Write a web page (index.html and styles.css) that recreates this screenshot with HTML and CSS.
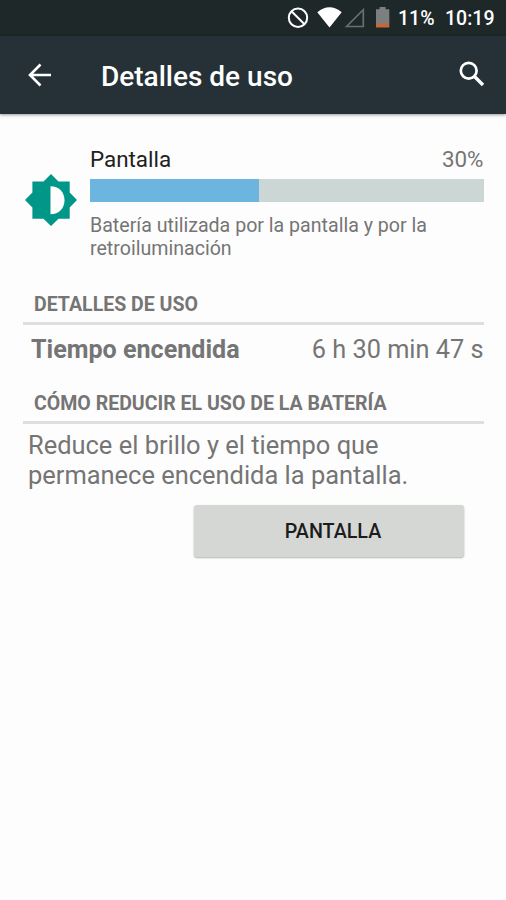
FILE: index.html
```html
<!DOCTYPE html>
<html lang="es">
<head>
<meta charset="utf-8">
<title>Detalles de uso</title>
<link rel="stylesheet" href="styles.css">
</head>
<body>
<div class="status">
  <svg class="status-icons" width="116" height="36" viewBox="0 0 116 36">
    <g fill="none" stroke="#fff" stroke-width="2"><circle cx="12" cy="17.700" r="9.200"/><path d="M5.500 11.200l13 13"/></g>
    <path fill="#fff" d="M31.300 12.200Q43.500 2.500 55.700 12.200L43.500 27.400z"/>
    <path fill="none" stroke="#667071" stroke-width="1.700" d="M60.500 26.500L77.300 9.700V26.500z"/>
    <path fill="#7c7f7f" d="M90 9.200h3.600V7h6v2.200h3.700V24H90z"/>
    <path fill="#c4683c" d="M90 23.500h13.300v4H90z"/>
  </svg>
  <span class="battery">11%</span>
  <span class="clock">10:19</span>
</div>
<header class="toolbar">
  <svg class="back" width="24" height="24" viewBox="0 0 24 24" fill="none" stroke="#fff" stroke-width="2.600"><path d="M23 12H2.500M12.500 1.500L2 12l10.500 10.500"/></svg>
  <h1>Detalles de uso</h1>
  <svg class="search" width="26" height="26" viewBox="0 0 26 26" fill="none" stroke="#fff"><circle cx="9.700" cy="9.700" r="7.900" stroke-width="2.700"/><path d="M15.500 15.500l8.500 8.500" stroke-width="3.300"/></svg>
</header>
<main>
  <section class="usage">
    <svg class="bright" width="52" height="52" viewBox="0 0 52 52"><path fill="#009688" d="M26 0l7.500 7.400H44.700V18.500L52 26l-7.300 7.500V44.700H33.500L26 52l-7.500-7.300H7.400V33.500L0 26l7.400-7.500V7.400H18.500z"/><path fill="#fff" d="M25.500 12.200c8.500 0 14 6 14 14s-5.500 14-14 14z"/></svg>
    <div class="info">
      <div class="row name"><span>Pantalla</span><span class="percent">30%</span></div>
      <div class="track"><div class="fill"></div></div>
      <p class="summary">Batería utilizada por la pantalla y por la retroiluminación</p>
    </div>
  </section>
  <h2>DETALLES DE USO</h2>
  <div class="row time"><b>Tiempo encendida</b><span class="duration">6 h 30 min 47 s</span></div>
  <h2>CÓMO REDUCIR EL USO DE LA BATERÍA</h2>
  <p class="tip">Reduce el brillo y el tiempo que permanece encendida la pantalla.</p>
  <button>PANTALLA</button>
</main>
</body>
</html>
```
FILE: styles.css
```css
* { box-sizing: border-box; }
body {
  margin: 0;
  height: 900px;
  overflow: hidden;
  background: #fdfdfd;
  color: #757575;
  font-family: Roboto, sans-serif;
}
h1, h2, p { margin: 0; }
svg { display: block; flex: none; }
.status {
  display: flex;
  align-items: center;
  height: 36px;
  padding-left: 286px;
  background: #1e2829;
  color: #fff;
  font-size: 19.5px;
  font-weight: 500;
  white-space: nowrap;
}
.battery { width: 47px; margin-left: -4px; }
.toolbar {
  display: flex;
  align-items: center;
  height: 78px;
  padding: 0 21px 0 28px;
  background: #253136;
  box-shadow: 0 1px 3px rgba(0, 0, 0, .4);
  color: #fff;
}
.search { margin-top: -2px; }
.toolbar h1 {
  flex: 1;
  margin-left: 49px;
  padding-top: 4px;
  font-size: 28px;
  line-height: 34px;
  font-weight: 500;
}
main { padding: 32px 22.5px 0 23px; }
.usage { display: flex; height: 146px; }
.bright { margin: 28px 13px 0 2px; }
.info { flex: 1; }
.row { display: flex; justify-content: space-between; }
.name { font-size: 22.4px; line-height: 26px; color: #212121; }
.percent { color: #757575; }
.track { height: 23px; margin-top: 7px; background: #ccd6d5; }
.fill { width: 43%; height: 100%; background: #6bb5de; }
.summary { margin-top: 12px; font-size: 19.6px; line-height: 23px; }
h2 {
  height: 33px;
  padding: 1px 0 0 11px;
  border-bottom: 3px solid #dedede;
  font-size: 19.55px;
  line-height: 23px;
  font-weight: 700;
}
.time {
  height: 66px;
  padding: 10px 0 0 8px;
  font-size: 25.1px;
  line-height: 30px;
}
.duration { font-size: 25.3px; }
.tip { padding: 7px 0 0 5px; font-size: 25.45px; line-height: 29.6px; }
button {
  display: block;
  width: 270px;
  height: 52px;
  margin: 15px 0 0 171px;
  padding: 1px 0 0 8px;
  border: 0;
  border-radius: 3px;
  background: #d5d7d4;
  box-shadow: 0 1px 2px rgba(0, 0, 0, .3);
  color: #1c1c1c;
  font: 500 19.7px/51px Roboto, sans-serif;
}
```
